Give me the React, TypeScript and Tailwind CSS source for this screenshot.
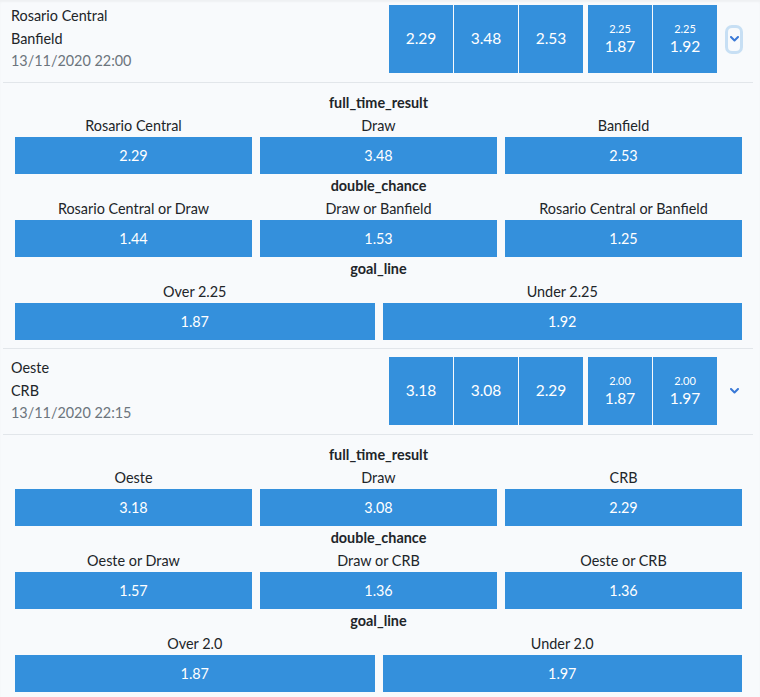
import React from 'react';

type Pick = { label: string; odd: string };
type Market = { name: string; picks: Pick[] };
type Match = {
  home: string;
  away: string;
  date: string;
  line: string;
  main: string[];
  handicap: string[];
  focused?: boolean;
  markets: Market[];
};

const matches: Match[] = [
  {
    home: 'Rosario Central',
    away: 'Banfield',
    date: '13/11/2020 22:00',
    line: '2.25',
    main: ['2.29', '3.48', '2.53'],
    handicap: ['1.87', '1.92'],
    focused: true,
    markets: [
      {
        name: 'full_time_result',
        picks: [
          { label: 'Rosario Central', odd: '2.29' },
          { label: 'Draw', odd: '3.48' },
          { label: 'Banfield', odd: '2.53' },
        ],
      },
      {
        name: 'double_chance',
        picks: [
          { label: 'Rosario Central or Draw', odd: '1.44' },
          { label: 'Draw or Banfield', odd: '1.53' },
          { label: 'Rosario Central or Banfield', odd: '1.25' },
        ],
      },
      {
        name: 'goal_line',
        picks: [
          { label: 'Over 2.25', odd: '1.87' },
          { label: 'Under 2.25', odd: '1.92' },
        ],
      },
    ],
  },
  {
    home: 'Oeste',
    away: 'CRB',
    date: '13/11/2020 22:15',
    line: '2.00',
    main: ['3.18', '3.08', '2.29'],
    handicap: ['1.87', '1.97'],
    markets: [
      {
        name: 'full_time_result',
        picks: [
          { label: 'Oeste', odd: '3.18' },
          { label: 'Draw', odd: '3.08' },
          { label: 'CRB', odd: '2.29' },
        ],
      },
      {
        name: 'double_chance',
        picks: [
          { label: 'Oeste or Draw', odd: '1.57' },
          { label: 'Draw or CRB', odd: '1.36' },
          { label: 'Oeste or CRB', odd: '1.36' },
        ],
      },
      {
        name: 'goal_line',
        picks: [
          { label: 'Over 2.0', odd: '1.87' },
          { label: 'Under 2.0', odd: '1.97' },
        ],
      },
    ],
  },
];

function Chevron({ focused }: { focused?: boolean }) {
  return (
    <button
      className={
        'ml-[11px] flex h-[23px] w-[12px] items-center justify-center rounded-[4px] ' +
        (focused ? 'shadow-[0_0_0_3px_rgba(52,144,220,0.25)]' : '')
      }
    >
      <svg width="9" height="6" viewBox="0 0 9 6">
        <polyline points="1,1 4.5,4.5 8,1" fill="none" stroke="#3a78d6" strokeWidth="2" strokeLinecap="round" strokeLinejoin="round" />
      </svg>
    </button>
  );
}

function MatchRow({ match, first }: { match: Match; first: boolean }) {
  return (
    <div>
      <div className={'flex items-center border-b border-[#e2e6ea] pl-[8px] pr-[13px] pb-[9px] ' + (first ? 'pt-[5px]' : 'pt-[8px]')}>
        <div className="flex-1 leading-[22.6px]">
          <div className="text-[#212529]">{match.home}</div>
          <div className="text-[#212529]">{match.away}</div>
          <div className="text-[#6c757d]">{match.date}</div>
        </div>
        <div className="flex gap-[5px]">
          <div className="flex gap-[1px]">
            {match.main.map((o, i) => (
              <div key={i} className="flex h-[68px] w-[64px] items-center justify-center bg-[#3490dc] text-[15.5px] text-white">
                {o}
              </div>
            ))}
          </div>
          <div className="flex gap-[1px]">
            {match.handicap.map((o, i) => (
              <div key={i} className="flex h-[68px] w-[64px] flex-col items-center justify-center bg-[#3490dc] text-white">
                <span className="text-[11px] leading-[14px]">{match.line}</span>
                <span className="text-[15.5px] leading-[20px]">{o}</span>
              </div>
            ))}
          </div>
        </div>
        <Chevron focused={match.focused} />
      </div>
      <div className="border-b border-[#e2e6ea] pl-[12px] pr-[11px] py-[8px]">
        {match.markets.map((m) => (
          <div key={m.name}>
            <div className="text-center font-bold leading-[23px] text-[#212529]">{m.name}</div>
            <div className={'grid gap-x-[8px] ' + (m.picks.length === 3 ? 'grid-cols-3' : 'grid-cols-2')}>
              {m.picks.map((p) => (
                <div key={p.label}>
                  <div className="text-center leading-[23px] text-[#212529]">{p.label}</div>
                  <div className="flex h-[37px] items-center justify-center bg-[#3490dc] text-white">{p.odd}</div>
                </div>
              ))}
            </div>
          </div>
        ))}
      </div>
    </div>
  );
}

export default function App() {
  return (
    <div
      className="h-[697px] w-[760px] overflow-hidden bg-[#f8fafc] text-[14.4px] shadow-[inset_0_2px_2px_rgba(0,0,0,0.04)]"
      style={{ fontFamily: 'Lato, "Noto Sans", sans-serif' }}
    >
      <div className="ml-[3px] w-[750px]">
        {matches.map((m, i) => (
          <MatchRow key={i} match={m} first={i === 0} />
        ))}
      </div>
    </div>
  );
}
